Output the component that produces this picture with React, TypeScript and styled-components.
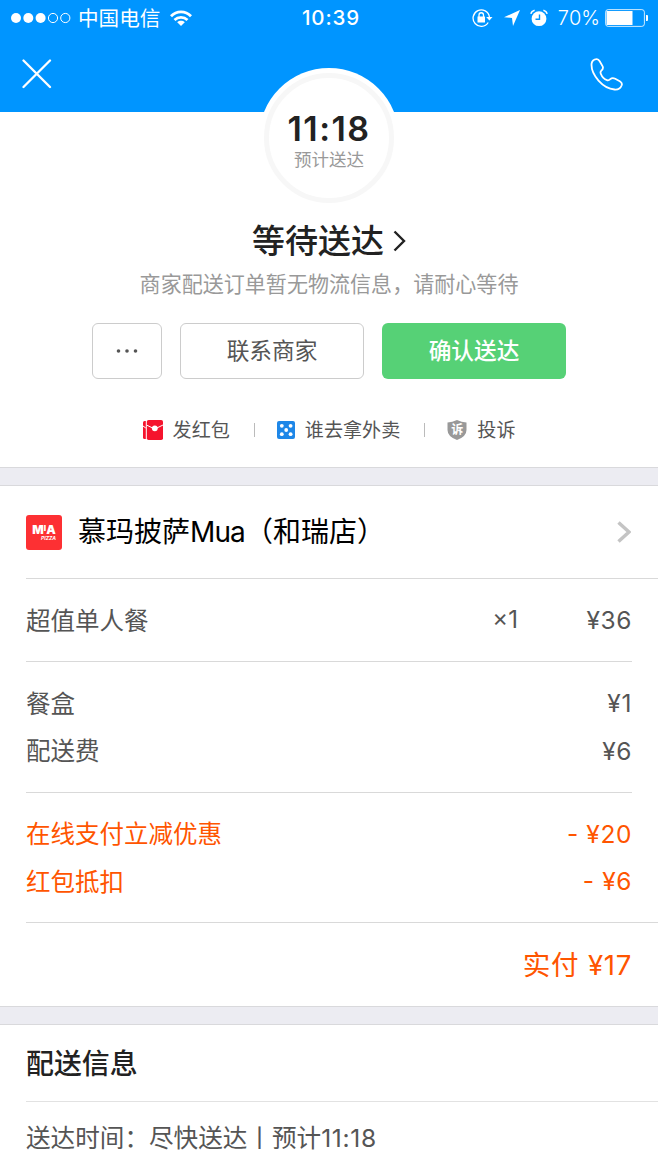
import React from "react";
import styled, { createGlobalStyle } from "styled-components";

const GlobalStyle = createGlobalStyle`
  * { box-sizing: border-box; }
  body {
    margin: 0;
    background: #fff;
    color: #555;
    font-family: Inter, "Noto Sans CJK SC", sans-serif;
    font-weight: 400;
    font-kerning: none;
  }
  svg { display: block; flex: none; }
  button { font-family: inherit; padding: 0; cursor: pointer; }
`;

const Screen = styled.main`
  width: 658px;
  height: 1170px;
  overflow: hidden;
  background: #fff;
`;

const Header = styled.header`
  height: 112px;
  background: #0095ff;
  color: #fff;
`;

const StatusBar = styled.div`
  height: 36px;
  padding: 0 10px 0 11px;
  display: grid;
  grid-template-columns: 1fr auto 1fr;
  align-items: center;
  font-size: 20.6px;
  line-height: 36px;
`;

const StatusGroup = styled.div<{ $end?: boolean }>`
  display: flex;
  align-items: center;
  justify-content: ${(p) => (p.$end ? "flex-end" : "flex-start")};
`;

const StatusIcon = styled.span`
  margin: 0 10px 0 11px;
`;

const Carrier = styled.span`
  margin: 0 10px 0 7px;
  padding-top: 1px;
  line-height: 35px;
`;

const Clock = styled.span`
  padding-left: 3px;
  font-size: 20.5px;
  font-weight: 500;
  letter-spacing: 0.9px;
`;

const Percent = styled.span`
  margin: 0 5px 0 10px;
  font-size: 20px;
  font-weight: 350;
`;

const NavBar = styled.nav`
  height: 76px;
  padding: 0 35px 0 22px;
  display: flex;
  align-items: center;
  justify-content: space-between;
`;

const IconButton = styled.button`
  border: 0;
  background: none;
  color: inherit;
`;

const Summary = styled.section`
  height: 355px;
  display: flex;
  flex-direction: column;
  align-items: center;
`;

const TimeBadge = styled.div`
  position: relative;
  flex: none;
  width: 140px;
  height: 140px;
  margin-top: -44px;
  border-radius: 50%;
  background: #fff;
  display: flex;
  flex-direction: column;
  align-items: center;
  padding-top: 41px;

  &::after {
    content: "";
    position: absolute;
    inset: 5px;
    border: 5px solid #f7f7f7;
    border-radius: 50%;
  }
`;

const BadgeTime = styled.strong`
  font-size: 34px;
  line-height: 39px;
  font-weight: 600;
  letter-spacing: 1.5px;
  color: #222;
`;

const BadgeLabel = styled.span`
  font-size: 17.5px;
  line-height: 24px;
  color: #999;
`;

const StatusTitle = styled.h1`
  margin: 13px 0 0;
  height: 40px;
  display: flex;
  align-items: center;
  gap: 9px;
  font-size: 33px;
  line-height: 40px;
  font-weight: 500;
  color: #222;
`;

const Hint = styled.p`
  margin: 9px 0 0;
  font-size: 21.05px;
  line-height: 30px;
  color: #999;
  white-space: nowrap;
`;

const Actions = styled.div`
  display: flex;
  gap: 18px;
  margin-top: 23px;
`;

const ActionButton = styled.button<{ $primary?: boolean; $small?: boolean }>`
  width: ${(p) => (p.$small ? 70 : 184)}px;
  height: 56px;
  padding-bottom: ${(p) => (p.$small ? 0 : 3)}px;
  border: ${(p) => (p.$primary ? "0" : "1px solid #ccc")};
  border-radius: 6px;
  background: ${(p) => (p.$primary ? "#56d176" : "#fff")};
  color: ${(p) => (p.$primary ? "#fff" : "#555")};
  font-size: 22.7px;
  font-weight: ${(p) => (p.$primary ? 500 : 400)};
  display: flex;
  align-items: center;
  justify-content: center;
`;

const Links = styled.div`
  display: flex;
  align-items: center;
  height: 28px;
  margin-top: 37px;
`;

const LinkItem = styled.a`
  display: flex;
  align-items: center;
  gap: 10px;
  font-size: 19.1px;
  line-height: 28px;
`;

const LinkDivider = styled.i`
  width: 1px;
  height: 14px;
  margin: 0 22px 0 24px;
  background: #bbb;
`;

const Shield = styled.span`
  position: relative;
  width: 20px;
  height: 20px;
`;

const ShieldText = styled.span`
  position: absolute;
  inset: 0;
  text-align: center;
  font-size: 12px;
  line-height: 19px;
  font-weight: 700;
  color: #fff;
`;

const Gap = styled.div`
  height: 19px;
  background: #ececf2;
  border: solid #d9d9dc;
  border-width: 1px 0;
`;

const Section = styled.section`
  padding-left: 26px;
`;

const StoreRow = styled.div`
  height: 93px;
  padding-right: 27px;
  border-bottom: 1px solid #d9d9d9;
  display: flex;
  align-items: center;
`;

const Logo = styled.div`
  width: 36px;
  height: 35px;
  margin-right: 16px;
  border-radius: 3px;
  background: #fd3033;
  color: #fff;
  padding-top: 9px;
  text-align: center;
`;

const LogoName = styled.div`
  display: flex;
  justify-content: center;
  font-size: 12px;
  line-height: 12px;
  font-weight: 900;
`;

const LogoInitial = styled.span`
  font-size: 8px;
  line-height: 9px;
`;

const LogoSub = styled.div`
  padding-left: 9px;
  font-size: 5px;
  line-height: 5px;
  font-weight: 700;
  font-style: italic;
`;

const StoreName = styled.h2`
  margin: 0;
  padding-top: 1px;
  flex: 1;
  font-size: 28px;
  font-weight: 400;
  line-height: 39px;
  color: #000;
`;

const Latin = styled.span<{ $spacing: number }>`
  letter-spacing: ${(p) => p.$spacing}px;
`;

const Group = styled.div<{ $full?: boolean; $pad: number }>`
  margin-right: ${(p) => (p.$full ? 0 : 26)}px;
  padding: ${(p) => p.$pad}px ${(p) => (p.$full ? 26 : 0)}px ${(p) => p.$pad}px 0;
  border-bottom: 1px solid #d9d9d9;
`;

const Line = styled.div<{ $accent?: boolean }>`
  height: 47.5px;
  display: grid;
  grid-template-columns: 1fr auto 114px;
  align-items: center;
  font-size: 24.5px;
  line-height: 36px;
  color: ${(p) => (p.$accent ? "#ff5500" : "#555")};
`;

const ItemName = styled.span`
  padding-top: 1px;
  line-height: 36px;
`;

const Quantity = styled.span`
  font-size: 24px;
`;

const Price = styled.span`
  text-align: right;
  letter-spacing: 0.6px;
`;

const Total = styled.div`
  height: 83px;
  padding: 0 26px 4px 0;
  display: flex;
  align-items: center;
  justify-content: flex-end;
  font-size: 27.6px;
  letter-spacing: 0.7px;
  white-space: pre;
  color: #ff5500;
`;

const InfoTitle = styled.h2`
  margin: 0;
  height: 77px;
  border-bottom: 1px solid #e2e2e2;
  font-size: 27.9px;
  font-weight: 500;
  line-height: 78px;
  color: #222;
`;

const InfoText = styled.p`
  margin: 18px 0 0;
  font-size: 24.6px;
  line-height: 36px;
  white-space: nowrap;
`;

const Signal = () => (
  <svg width="60" height="12" viewBox="0 0 60 12" fill="none" stroke="#fff" strokeWidth="1">
    {[5, 17.3, 29.6].map((x) => <circle key={x} cx={x} cy="6" r="5" fill="#fff" stroke="none" />)}
    <circle cx="42" cy="6" r="4.6" />
    <circle cx="54.3" cy="6" r="4.6" />
  </svg>
);

const Wifi = () => (
  <svg width="22" height="17" viewBox="0 0 22 17" fill="none" stroke="#fff" strokeWidth="2.8">
    <path d="M1 6.2C6.5.5 15.5.5 21 6.2" />
    <path d="M4.5 10C8.2 6.4 13.8 6.4 17.5 10" />
    <path d="M11 16 7.2 12.2C9.3 10.3 12.7 10.3 14.8 12.2Z" fill="#fff" stroke="none" />
  </svg>
);

const RotationLock = () => (
  <svg width="21" height="20" viewBox="0 0 21 20" fill="none" stroke="#fff" strokeWidth="1.3">
    <path d="M16.2 14.5A8.2 8.2 0 1 1 17.4 9" />
    <path d="M14.2 9H20.5L17.4 12.5Z" fill="#fff" stroke="none" />
    <rect x="5.5" y="8.5" width="7.5" height="6" fill="#fff" stroke="none" />
    <path d="M7 9V7a2.25 2.25 0 0 1 4.5 0v2" />
  </svg>
);

const LocationArrow = () => (
  <svg width="16" height="16" viewBox="0 0 16 16" fill="#fff">
    <path d="M16 0 9 16 8 8 0 7.2Z" />
  </svg>
);

const Alarm = () => (
  <svg width="18" height="18" viewBox="0 0 18 18" fill="none">
    <circle cx="9" cy="9.7" r="7.4" fill="#fff" />
    <path d="M9.5 5.5V10.2H5.5" stroke="#0095ff" strokeWidth="1.4" />
    <path d="M.8 4.8Q1.6 2 4.6 1.2M17.2 4.8Q16.4 2 13.4 1.2" stroke="#fff" strokeWidth="1.6" />
  </svg>
);

const Battery = () => (
  <svg width="43" height="18" viewBox="0 0 43 18">
    <rect x=".6" y=".6" width="38.8" height="16.8" rx="2.6" fill="none" stroke="#fff" strokeOpacity=".8" />
    <path d="M1.5 2H27.5V16H1.5Z" fill="#fff" />
    <path d="M41 6h1q1 0 1 1v4q0 1-1 1h-1Z" fill="#fff" />
  </svg>
);

const CloseIcon = () => (
  <svg width="30" height="30" viewBox="0 0 30 30" stroke="#fff" strokeWidth="2.3" strokeLinecap="round">
    <path d="M1.5 1.5 28 28M28 1.5 1.5 28" />
  </svg>
);

const PhoneIcon = () => (
  <svg width="33" height="33" viewBox="0 0 33 33" fill="none" stroke="#fff" strokeWidth="1.8" strokeLinejoin="round">
    <path d="M1.6 5.5C2 3 4.5 1.3 6.7 1.1C8.3 1 9 2 9.7 3.2L12.5 8.1C13.7 10.3 12.8 11.5 11.2 12.8C10.3 13.6 10.4 14.8 10.9 16C12.1 19 14.2 21.2 17 22.2C18.5 22.8 19.4 22.1 20.3 21.2C21.8 19.7 23.6 19.9 25.2 20.7L29.8 23.2C31.5 24.2 32.3 25.5 31.7 27.2C30.6 30.1 27.7 31.8 24.5 31.5C18.5 31 12.8 27.4 8.5 22.6C4.5 18 1 11.7 1.6 5.5Z" />
  </svg>
);

const Chevron = ({ w, h, color, stroke }: { w: number; h: number; color: string; stroke: number }) => (
  <svg width={w} height={h} viewBox={`0 0 ${w} ${h}`} fill="none" stroke={color} strokeWidth={stroke}>
    <path d={`M1.5 1.5 ${w - 2} ${h / 2} 1.5 ${h - 1.5}`} />
  </svg>
);

const Dots = () => (
  <svg width="22" height="4" viewBox="0 0 22 4" fill="#555">
    <circle cx="2.5" cy="2" r="1.8" /><circle cx="11" cy="2" r="1.8" /><circle cx="19.5" cy="2" r="1.8" />
  </svg>
);

const RedPacket = () => (
  <svg width="20" height="20" viewBox="0 0 20 20">
    <path d="M1.5 1H2.8V19H1.5Q0 19 0 17.5V2.5Q0 1 1.5 1Z" fill="#f5132d" />
    <rect x="3.8" y="0" width="16.2" height="20" rx="1.8" fill="#f5132d" />
    <path d="M0 6 2.8 8M3.8 5.2 11.8 9 20 5" fill="none" stroke="#fff" strokeWidth="1" />
    <circle cx="11.8" cy="8.3" r="2.9" fill="#fff" />
  </svg>
);

const Dice = () => (
  <svg width="18" height="18" viewBox="0 0 18 18" fill="#fff">
    <rect width="18" height="18" rx="2" fill="#1e87e8" />
    {[[4.8, 4.8], [13.6, 4.8], [9.2, 9], [4.8, 13.2], [13.6, 13.2]].map(([x, y]) => (
      <circle key={`${x}-${y}`} cx={x} cy={y} r="1.9" />
    ))}
  </svg>
);

const ShieldIcon = () => (
  <Shield>
    <svg width="20" height="20" viewBox="0 0 20 20">
      <path d="M.5 2.5Q5.5 2 10 0Q14.5 2 19.5 2.5V10Q19.5 16.5 10 20Q.5 16.5 .5 10Z" fill="#999" />
    </svg>
    <ShieldText>诉</ShieldText>
  </Shield>
);

const fees = [["餐盒", "¥1"], ["配送费", "¥6"]];
const discounts = [["在线支付立减优惠", "- ¥20"], ["红包抵扣", "- ¥6"]];

export default function App() {
  return (
    <Screen>
      <GlobalStyle />
      <Header>
        <StatusBar>
          <StatusGroup><Signal /><Carrier>中国电信</Carrier><Wifi /></StatusGroup>
          <Clock>10:39</Clock>
          <StatusGroup $end>
            <RotationLock />
            <StatusIcon><LocationArrow /></StatusIcon>
            <Alarm />
            <Percent>70%</Percent>
            <Battery />
          </StatusGroup>
        </StatusBar>
        <NavBar>
          <IconButton aria-label="关闭"><CloseIcon /></IconButton>
          <IconButton aria-label="电话"><PhoneIcon /></IconButton>
        </NavBar>
      </Header>

      <Summary>
        <TimeBadge>
          <BadgeTime>11:18</BadgeTime>
          <BadgeLabel>预计送达</BadgeLabel>
        </TimeBadge>
        <StatusTitle>等待送达<Chevron w={13} h={22} color="#222" stroke={2.4} /></StatusTitle>
        <Hint>商家配送订单暂无物流信息，请耐心等待</Hint>
        <Actions>
          <ActionButton $small aria-label="更多"><Dots /></ActionButton>
          <ActionButton>联系商家</ActionButton>
          <ActionButton $primary>确认送达</ActionButton>
        </Actions>
        <Links>
          <LinkItem><RedPacket />发红包</LinkItem>
          <LinkDivider />
          <LinkItem><Dice />谁去拿外卖</LinkItem>
          <LinkDivider />
          <LinkItem><ShieldIcon />投诉</LinkItem>
        </Links>
      </Summary>

      <Gap />
      <Section>
        <StoreRow>
          <Logo>
            <LogoName>M<LogoInitial>I</LogoInitial>A</LogoName>
            <LogoSub>PIZZA</LogoSub>
          </Logo>
          <StoreName>慕玛披萨<Latin $spacing={-0.9}>Mua</Latin>（和瑞店）</StoreName>
          <Chevron w={14} h={22} color="#c4c4c4" stroke={3.5} />
        </StoreRow>
        <Group $pad={17.25}>
          <Line><ItemName>超值单人餐</ItemName><Quantity>×1</Quantity><Price>¥36</Price></Line>
        </Group>
        <Group $pad={17.5}>
          {fees.map(([name, price]) => (
            <Line key={name}><ItemName>{name}</ItemName><span /><Price>{price}</Price></Line>
          ))}
        </Group>
        <Group $pad={17} $full>
          {discounts.map(([name, price]) => (
            <Line key={name} $accent><ItemName>{name}</ItemName><span /><Price>{price}</Price></Line>
          ))}
        </Group>
        <Total>实付 ¥17</Total>
      </Section>

      <Gap />
      <Section>
        <InfoTitle>配送信息</InfoTitle>
        <InfoText>送达时间：尽快送达丨预计<Latin $spacing={0.7}>11:18</Latin></InfoText>
      </Section>
    </Screen>
  );
}
